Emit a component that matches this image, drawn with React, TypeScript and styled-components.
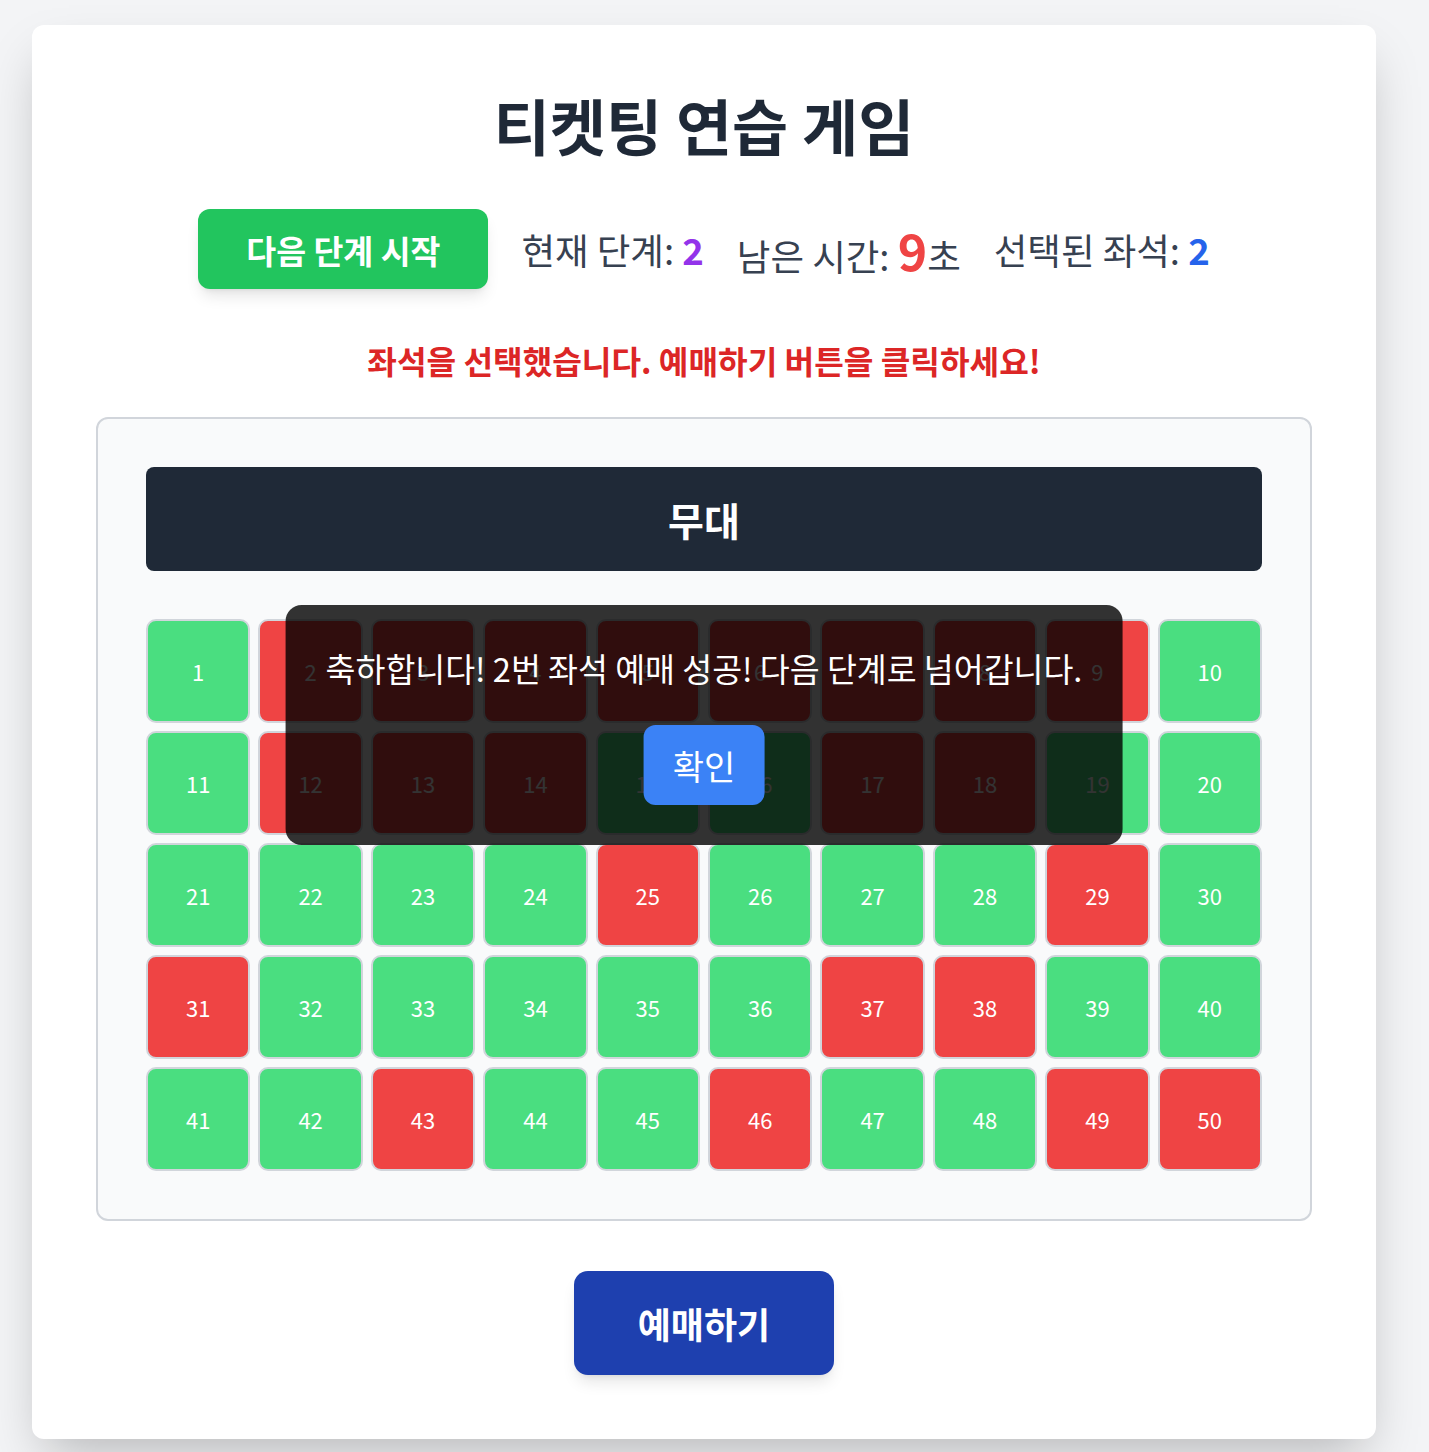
import React from "react";
import styled, { createGlobalStyle } from "styled-components";

const GlobalStyle = createGlobalStyle`
  html, body {
    margin: 0;
    padding: 0;
    background: #f3f4f6;
    font-family: "Noto Sans CJK KR", "Noto Sans", sans-serif;
  }
  * { box-sizing: border-box; }
`;

const Page = styled.div`
  padding: 25px 32px 40px;
`;

const Card = styled.main`
  position: relative;
  width: 1344px;
  background: #ffffff;
  border-radius: 12px;
  box-shadow: 0 25px 50px -12px rgba(0, 0, 0, 0.25);
  padding: 64px;
  display: flex;
  flex-direction: column;
  align-items: center;
`;

const Title = styled.h1`
  margin: 0;
  font-size: 61px;
  line-height: 72px;
  font-weight: 700;
  color: #1f2937;
  text-align: center;
`;

const InfoRow = styled.div`
  margin-top: 48px;
  display: flex;
  align-items: center;
  gap: 33px;
`;

const StartButton = styled.button`
  height: 80px;
  padding: 0 48px;
  border: none;
  border-radius: 12px;
  background: #22c55e;
  color: #ffffff;
  font-family: inherit;
  font-size: 32.5px;
  font-weight: 700;
  box-shadow: 0 10px 15px -3px rgba(0, 0, 0, 0.1), 0 4px 6px -4px rgba(0, 0, 0, 0.1);
  cursor: pointer;
`;

const InfoItem = styled.span`
  font-size: 36.5px;
  color: #374151;
  display: inline-flex;
  align-items: baseline;
  white-space: pre;
`;

const Value = styled.span<{ $color: string; $size?: number }>`
  color: ${(p) => p.$color};
  font-weight: 700;
  font-size: ${(p) => (p.$size ? `${p.$size}px` : "inherit")};
`;

const Message = styled.p`
  margin: 50px 0 0;
  font-size: 32.2px;
  line-height: 42px;
  font-weight: 700;
  color: #dc2626;
  text-align: center;
`;

const Hall = styled.section`
  margin-top: 36px;
  width: 100%;
  border: 2px solid #d1d5db;
  border-radius: 12px;
  background: #f9fafb;
  padding: 48px;
`;

const Stage = styled.div`
  height: 104px;
  border-radius: 8px;
  background: #1f2937;
  color: #ffffff;
  font-size: 39px;
  font-weight: 700;
  display: flex;
  align-items: center;
  justify-content: center;
`;

const SeatGrid = styled.div`
  margin-top: 48px;
  display: grid;
  grid-template-columns: repeat(10, 1fr);
  grid-auto-rows: 104px;
  gap: 8px;
`;

const Seat = styled.button<{ $taken: boolean }>`
  border: 2px solid #d1d5db;
  border-radius: 10px;
  background: ${(p) => (p.$taken ? "#ef4444" : "#4ade80")};
  color: #ffffff;
  font-family: inherit;
  font-size: 22px;
  display: flex;
  align-items: center;
  justify-content: center;
  padding: 0;
  cursor: pointer;
`;

const BookButton = styled.button`
  margin-top: 50px;
  height: 104px;
  padding: 0 64px;
  border: none;
  border-radius: 14px;
  background: #1e40af;
  color: #ffffff;
  font-family: inherit;
  font-size: 36px;
  font-weight: 700;
  box-shadow: 0 10px 15px -3px rgba(0, 0, 0, 0.1), 0 4px 6px -4px rgba(0, 0, 0, 0.1);
  cursor: pointer;
`;

const Toast = styled.div`
  position: absolute;
  top: 580px;
  left: 50%;
  transform: translateX(-50%);
  background: rgba(0, 0, 0, 0.8);
  color: #ffffff;
  border-radius: 16px;
  padding: 40px;
  display: flex;
  flex-direction: column;
  align-items: center;
  white-space: nowrap;
`;

const ToastText = styled.p`
  margin: 0;
  font-size: 32.5px;
  line-height: 45px;
`;

const ConfirmButton = styled.button`
  margin-top: 35px;
  height: 80px;
  padding: 0 29px;
  border: none;
  border-radius: 12px;
  background: #3b82f6;
  color: #ffffff;
  font-family: inherit;
  font-size: 34px;
  cursor: pointer;
`;

const taken = new Set([2, 3, 4, 5, 6, 7, 8, 9, 12, 13, 14, 17, 18, 25, 29, 31, 37, 38, 43, 46, 49, 50]);
const seats = Array.from({ length: 50 }, (_, i) => i + 1);

export default function App() {
  return (
    <>
      <GlobalStyle />
      <Page>
        <Card>
          <Title>티켓팅 연습 게임</Title>
          <InfoRow>
            <StartButton>다음 단계 시작</StartButton>
            <InfoItem>
              현재 단계: <Value $color="#9333ea">2</Value>
            </InfoItem>
            <InfoItem>
              남은 시간: <Value $color="#ef4444" $size={50}>9</Value>초
            </InfoItem>
            <InfoItem>
              선택된 좌석: <Value $color="#2563eb">2</Value>
            </InfoItem>
          </InfoRow>
          <Message>좌석을 선택했습니다. 예매하기 버튼을 클릭하세요!</Message>
          <Hall>
            <Stage>무대</Stage>
            <SeatGrid>
              {seats.map((n) => (
                <Seat key={n} $taken={taken.has(n)}>
                  {n}
                </Seat>
              ))}
            </SeatGrid>
          </Hall>
          <BookButton>예매하기</BookButton>
          <Toast>
            <ToastText>축하합니다! 2번 좌석 예매 성공! 다음 단계로 넘어갑니다.</ToastText>
            <ConfirmButton>확인</ConfirmButton>
          </Toast>
        </Card>
      </Page>
    </>
  );
}
